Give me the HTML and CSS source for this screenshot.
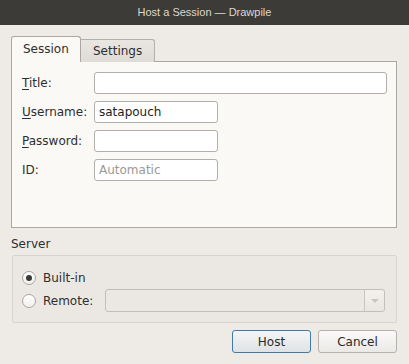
FILE: index.html
```html
<!DOCTYPE html>
<html lang="en">
<head>
  <meta charset="UTF-8" />
  <title>Host a Session — Drawpile</title>
  <link rel="stylesheet" href="styles.css">
</head>
<body>
  <div class="titlebar">Host a Session — Drawpile</div>
  <div class="dialog">
    <div class="tabs">
      <div class="tab active">Session</div>
      <div class="tab">Settings</div>
    </div>
    <div class="panel">
      <div class="form">
        <label><u>T</u>itle:</label>
        <div class="field wide"></div>
        <label><u>U</u>sername:</label>
        <div class="field">satapouch</div>
        <label><u>P</u>assword:</label>
        <div class="field"></div>
        <label>ID:</label>
        <div class="field placeholder">Automatic</div>
      </div>
    </div>

    <div class="server-label">Server</div>
    <div class="group">
      <div class="radio-row">
        <span class="radio checked"></span>
        <span>Built-in</span>
      </div>
      <div class="radio-row">
        <span class="radio"></span>
        <span class="remote-label">Remote:</span>
        <div class="combo">
          <div class="combo-text"></div>
          <div class="combo-arrow"><span></span></div>
        </div>
      </div>
    </div>

    <div class="buttons">
      <button class="btn default">Host</button>
      <button class="btn">Cancel</button>
    </div>
  </div>
</body>
</html>
```

FILE: styles.css
```css
body {
  margin: 0;
  width: 409px;
  height: 364px;
  background: #eeebe7;
  font-family: 'DejaVu Sans', sans-serif;
  font-size: 12px;
  color: #2e2e2e;
  overflow: hidden;
}
.titlebar {
  height: 25px;
  line-height: 25px;
  background: #3c3b37;
  color: #dcd8cf;
  text-align: center;
  font-family: 'Liberation Sans', sans-serif;
  font-size: 11px;
}
.dialog {
  padding: 0 12px 0 11px;
}
.tabs {
  display: flex;
  align-items: flex-end;
  margin-top: 11px;
  margin-bottom: -1px;
  height: 26px;
}
.tab {
  box-sizing: border-box;
  height: 23px;
  padding: 0 12px;
  line-height: 23px;
  border: 1px solid #b3afaa;
  border-bottom: none;
  border-left: none;
  border-radius: 0 3px 0 0;
  background: linear-gradient(#eae7e3, #dfdcd8);
}
.tab.active {
  position: relative;
  z-index: 1;
  height: 26px;
  line-height: 25px;
  padding: 0 12px 0 11px;
  width: 70px;
  border-left: 1px solid #aaa6a1;
  border-color: #aaa6a1;
  border-radius: 3px 3px 0 0;
  background: #fbf9f6;
}
.panel {
  box-sizing: border-box;
  height: 167px;
  border: 1px solid #aaa6a1;
  background: #fbf9f6;
}
.form {
  display: grid;
  grid-template-columns: 72px 1fr;
  row-gap: 7px;
  padding: 10px 9px 0 10px;
  align-items: center;
}
.form label {
  line-height: 22px;
}
.form u {
  text-decoration-thickness: 1px;
  text-underline-offset: 2px;
}
.field {
  box-sizing: border-box;
  width: 124px;
  height: 22px;
  line-height: 20px;
  padding: 0 4px;
  border: 1px solid #b2aea9;
  border-radius: 3px;
  background: #fff;
  color: #1e1e1e;
}
.field.wide {
  width: auto;
}
.field.placeholder {
  color: #9b9995;
}
.server-label {
  margin-top: 8px;
  line-height: 16px;
}
.group {
  box-sizing: border-box;
  height: 68px;
  margin: 3px 0 0 1px;
  padding: 10px 11px 0 9px;
  border: 1px solid #d8d4cf;
  border-radius: 2px;
  background: #ebe8e4;
}
.radio-row {
  display: flex;
  align-items: center;
  height: 23px;
}
.radio {
  box-sizing: border-box;
  width: 14px;
  height: 14px;
  margin-right: 7px;
  border: 1px solid #a9a5a0;
  border-radius: 50%;
  background: linear-gradient(#ffffff, #f2f0ed);
  display: flex;
  align-items: center;
  justify-content: center;
}
.radio.checked::after {
  content: '';
  width: 6px;
  height: 6px;
  border-radius: 50%;
  background: #3a3a3a;
}
.remote-label {
  width: 62px;
}
.combo {
  flex: 1;
  display: flex;
  box-sizing: border-box;
  height: 23px;
  border: 1px solid #c2beb9;
  border-radius: 3px;
  background: #ebe8e4;
}
.combo-text {
  flex: 1;
  border-right: 1px solid #c8c4bf;
}
.combo-arrow {
  width: 19px;
  display: flex;
  align-items: center;
  justify-content: center;
  background: linear-gradient(#f3f1ee, #e9e6e2);
  border-radius: 0 3px 3px 0;
}
.combo-arrow span {
  width: 0;
  height: 0;
  border-left: 4px solid transparent;
  border-right: 4px solid transparent;
  border-top: 4px solid #c9c6c2;
}
.buttons {
  display: flex;
  justify-content: flex-end;
  gap: 7px;
  margin-top: 7px;
}
.btn {
  box-sizing: border-box;
  width: 79px;
  height: 23px;
  padding: 0;
  font-family: inherit;
  font-size: 12px;
  color: #2a2a2a;
  border: 1px solid #b5b1ac;
  border-radius: 3px;
  background: linear-gradient(#fbfaf9, #ebe9e6);
}
.btn.default {
  border-color: #3d7bab;
  background: linear-gradient(#f4f5f6, #dfe3e6);
}
```
